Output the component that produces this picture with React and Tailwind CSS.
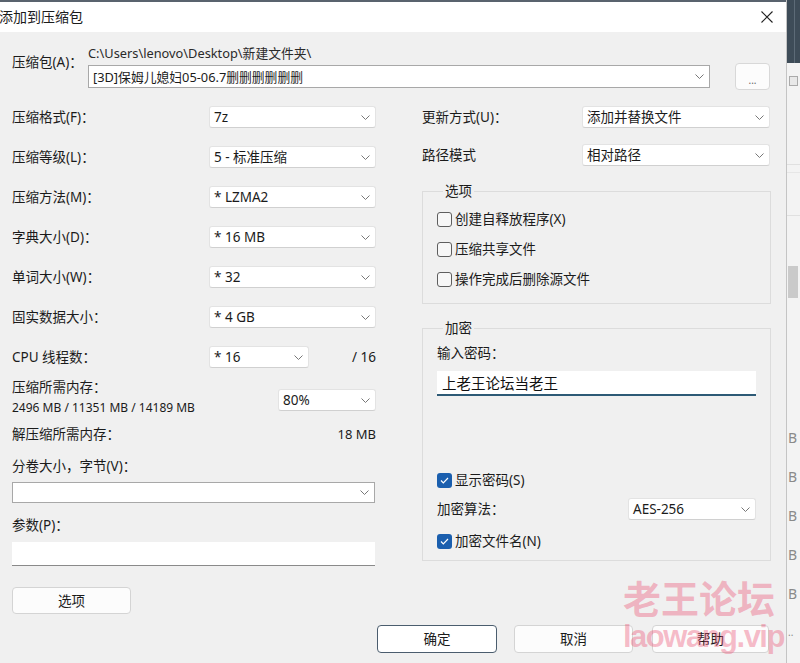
import React from "react";

const Chevron = () => (
  <svg width="9" height="5" viewBox="0 0 9 5" className="shrink-0">
    <polyline points="0.5,0.5 4.5,4.5 8.5,0.5" fill="none" stroke="#777" strokeWidth="1" />
  </svg>
);

function Combo({ text, className = "", dark }) {
  const frame = dark
    ? "border border-[#a8a8a8]"
    : "border border-[#e3e3e3] border-b-[#d0d0d0] rounded-[3px]";
  return (
    <div className={`flex items-center justify-between bg-white pl-[4px] pr-[5px] ${frame} ${className}`}>
      <span className="whitespace-nowrap leading-[18px]">{text}</span>
      <Chevron />
    </div>
  );
}

function Check({ checked, label, className = "h-[30px]" }) {
  return (
    <div className={`flex items-center gap-[3px] ${className}`}>
      {checked ? (
        <span className="w-[15px] h-[15px] rounded-[3px] bg-[#1b5fae] flex items-center justify-center">
          <svg width="9" height="7" viewBox="0 0 9 7">
            <polyline points="1,3.5 3.3,5.8 8,1" fill="none" stroke="#fff" strokeWidth="1.2" />
          </svg>
        </span>
      ) : (
        <span className="w-[15px] h-[15px] rounded-[3px] border border-[#5e5e5e] bg-[#f7f7f7]" />
      )}
      <span>{label}</span>
    </div>
  );
}

// 高度由调用处给出
function Btn({ children, className = "" }) {
  return (
    <div className={`flex items-center justify-center bg-[#fcfcfc] border rounded-[4px] ${className}`}>
      {children}
    </div>
  );
}

function Row({ label, children, h = "h-[40px]" }) {
  return (
    <div className={`flex items-center ${h}`}>
      <span className="w-[197px] shrink-0">{label}</span>
      {children}
    </div>
  );
}

export default function App() {
  return (
    <div className="w-[800px] h-[663px] relative overflow-hidden flex bg-[#f0f0f0] text-[#1b1b1b] text-[13.5px] leading-[20px] font-['Noto_Sans','Noto_Sans_CJK_SC',sans-serif]">
      {/* 对话框 */}
      <div className="w-[786px] flex flex-col shrink-0">
        <div className="h-[2px] bg-[#59636e]" />
        <div className="h-[30px] bg-white flex items-center justify-between pr-[13px]">
          <span className="text-[14px] -ml-[1px]">添加到压缩包</span>
          <svg width="12" height="12" viewBox="0 0 12 12">
            <path d="M0.5 0.5 L11.5 11.5 M11.5 0.5 L0.5 11.5" stroke="#222" strokeWidth="1.1" />
          </svg>
        </div>

        <div className="flex-1 pl-[12px] pt-[12px]">
          {/* 压缩包 */}
          <div className="flex">
            <span className="w-[76px] pt-[8px] shrink-0">压缩包(A)：</span>
            <div className="flex flex-col w-[622px]">
              <span className="h-[18px] leading-[18px] text-[12.8px] text-[#2a2a2a]">C:\Users\lenovo\Desktop\新建文件夹\</span>
              <Combo dark text="[3D]保姆儿媳妇05-06.7删删删删删删" className="mt-[3px] h-[23px] text-[12.8px]" />
            </div>
            <Btn className="ml-[25px] mt-[19px] w-[35px] h-[27px] border-[#d8d8d8] bg-[#fbfbfb]">
              <span className="text-[10px] text-[#666] pt-[6px]">...</span>
            </Btn>
          </div>

          <div className="flex mt-[7px]">
            {/* 左列 */}
            <div className="w-[364px] flex flex-col">
              <Row label="压缩格式(F)："><Combo text="7z" className="flex-1 h-[22px]" /></Row>
              <Row label="压缩等级(L)："><Combo text="5 - 标准压缩" className="flex-1 h-[22px]" /></Row>
              <Row label="压缩方法(M)："><Combo text="*  LZMA2" className="flex-1 h-[22px]" /></Row>
              <Row label="字典大小(D)："><Combo text="*  16 MB" className="flex-1 h-[22px]" /></Row>
              <Row label="单词大小(W)："><Combo text="*  32" className="flex-1 h-[22px]" /></Row>
              <Row label="固实数据大小："><Combo text="*  4 GB" className="flex-1 h-[22px]" /></Row>
              <Row label="CPU 线程数：">
                <Combo text="*  16" className="w-[100px] h-[22px]" />
                <span className="ml-auto">/ 16</span>
              </Row>

              <div className="flex h-[42px]">
                <div className="flex flex-col flex-1">
                  <span>压缩所需内存：</span>
                  <span className="text-[12px] leading-[22px]">2496 MB / 11351 MB / 14189 MB</span>
                </div>
                <Combo text="80%" className="w-[98px] h-[22px] mt-[12px]" />
              </div>

              <div className="flex mt-[5px] h-[20px]">
                <span>解压缩所需内存：</span>
                <span className="ml-auto text-[13px]">18 MB</span>
              </div>

              <span className="mt-[12px]">分卷大小，字节(V)：</span>
              <Combo dark text="" className="mt-[6px] h-[21px] w-[363px]" />

              <span className="mt-[12px]">参数(P)：</span>
              <div className="mt-[7px] h-[24px] w-[363px] bg-white border-b border-[#8a8a8a]" />

              <Btn className="mt-[21px] w-[119px] h-[27px] border-[#d4d4d4]">选项</Btn>
            </div>

            {/* 右列 */}
            <div className="ml-[46px] w-[349px] flex flex-col">
              <div className="flex items-center h-[40px]">
                <span className="w-[160px] shrink-0">更新方式(U)：</span>
                <Combo text="添加并替换文件" className="flex-1 h-[22px] pl-[3px] mr-[1px]" />
              </div>
              <div className="flex items-center h-[36px]">
                <span className="w-[160px] shrink-0">路径模式</span>
                <Combo text="相对路径" className="flex-1 h-[22px] pl-[3px] mr-[1px]" />
              </div>

              <fieldset className="mt-[8px] border border-[#dcdcdc] px-[14px] pt-[3px] pb-[9px]">
                <legend className="ml-[6px] px-[2px] leading-[20px]">选项</legend>
                <Check label="创建自释放程序(X)" />
                <Check label="压缩共享文件" />
                <Check label="操作完成后删除源文件" />
              </fieldset>

              <fieldset className="mt-[14px] border border-[#dcdcdc] px-[14px] pt-[5px] pb-[9px] flex flex-col">
                <legend className="ml-[6px] px-[2px] leading-[20px]">加密</legend>
                <span>输入密码：</span>
                <div className="mt-[8px] h-[25px] bg-white border-b-2 border-[#2d5a76] flex items-center pl-[5px] text-[14.5px] text-[#111]">
                  上老王论坛当老王
                </div>
                <Check checked label="显示密码(S)" className="mt-[74px] h-[20px]" />
                <div className="flex items-center mt-[8px] h-[22px]">
                  <span>加密算法：</span>
                  <Combo text="AES-256" className="ml-auto w-[128px] h-[22px]" />
                </div>
                <Check checked label="加密文件名(N)" className="mt-[11px] h-[20px]" />
              </fieldset>
            </div>
          </div>

          {/* 底部按钮 */}
          <div className="flex mt-[11px] ml-[365px]">
            <Btn className="w-[120px] h-[28px] bg-white border-[#4b5d6e]">确定</Btn>
            <Btn className="w-[119px] h-[28px] ml-[17px] border-[#d4d4d4]">取消</Btn>
            <Btn className="w-[117px] h-[28px] ml-[19px] border-[#d4d4d4]">帮助</Btn>
          </div>
        </div>
      </div>

      {/* 背后窗口的边缘 */}
      <div className="flex-1 flex flex-col border-l border-[#c4c4c4] bg-[#f3f3f3] text-[#8a8a8a] text-[14px]">
        <div className="h-[63px] bg-[#3e4c58] flex justify-end pr-[5px]">
          <div className="w-[1px] bg-[#5d6b77]" />
        </div>
        <div className="mt-[13px] ml-[2px] w-[9px] h-[10px] border border-[#aaa] bg-[#e8e8e8]" />
        <div className="mt-[78px] h-[1px] bg-[#e0e0e0]" />
        <div className="mt-[7px] h-[1px] bg-[#e6e6e6]" />
        <div className="mt-[42px] h-[1px] bg-[#e0e0e0]" />
        <div className="mt-[50px] ml-[1px] w-[10px] h-[32px] bg-[#cacaca]" />
        <div className="mt-[120px] flex flex-col leading-[39px] pl-[1px]">
          <span>B</span>
          <span>B</span>
          <span>B</span>
          <span>B</span>
          <span>B</span>
          <span className="text-[10px]">..</span>
        </div>
      </div>

      {/* 水印 */}
      <div className="absolute left-[623px] top-[578px] text-[38px] leading-[38px] font-bold text-[rgba(235,80,115,0.38)] font-['Noto_Sans_CJK_SC',sans-serif] pointer-events-none">
        老王论坛
      </div>
      <div className="absolute left-[623px] top-[621px] text-[31px] leading-[31px] font-bold tracking-[-1.5px] text-[rgba(235,80,115,0.38)] font-['Liberation_Sans',sans-serif] pointer-events-none">
        laowang.vip
      </div>
    </div>
  );
}
